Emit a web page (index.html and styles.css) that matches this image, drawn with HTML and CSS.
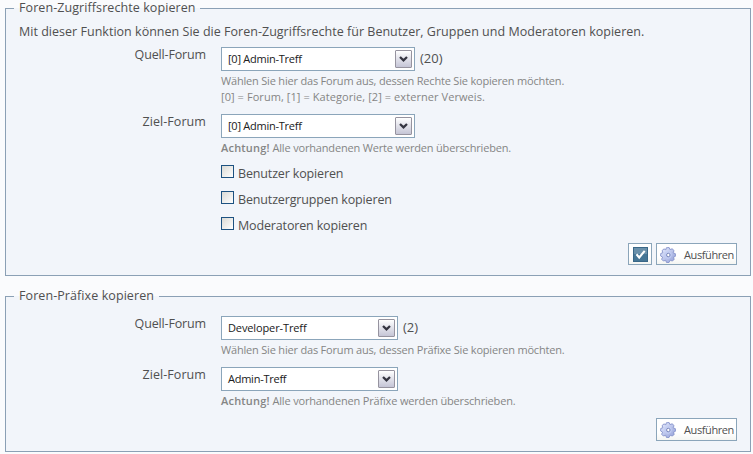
FILE: index.html
```
<!DOCTYPE html>
<html lang="de">
<head>
<meta charset="utf-8">
<title>Foren kopieren</title>
<link rel="stylesheet" href="styles.css">
</head>
<body>
<svg width="0" height="0" class="defs">
  <defs>
    <linearGradient id="gearFill" x1="0" y1="0" x2="1" y2="1"><stop offset="0" stop-color="#e8edff"/><stop offset="1" stop-color="#929fd8"/></linearGradient>
    <symbol id="gear" viewBox="0 0 16 16">
      <path d="M6.3 .8 9.1.5 9.9 2.5 12.4 1.8 14 3.8 13.1 5.8 15.4 6.7 15.4 9.3 13.5 10.2 14.2 12.5 12.1 14 10.3 13.2 9 15.5 6.4 15.4 5.7 13.3 3.4 14 1.6 12.2 2.6 10.2.6 8.9.8 6.4 2.8 5.8 2.1 3.5 4 1.9 5.8 2.8Z" fill="url(#gearFill)" stroke="#8492cb" stroke-width=".9" stroke-linejoin="round"/>
      <circle cx="8" cy="8" r="3.3" fill="none" stroke="#c3cef5"/>
      <circle cx="8.3" cy="8" r="1.7" fill="#fff" stroke="#6675b0" stroke-width=".8"/>
    </symbol>
    <symbol id="arrow" viewBox="0 0 9 6"><path d="M1 1 4.5 4.3 8 1" fill="none" stroke="#343440" stroke-width="2.3"/></symbol>
  </defs>
</svg>
<fieldset class="first">
  <legend class="legend-rights">Foren-Zugriffsrechte kopieren</legend>
  <p class="intro">Mit dieser Funktion können Sie die Foren-Zugriffsrechte für Benutzer, Gruppen und Moderatoren kopieren.</p>
  <div class="row source">
    <label>Quell-Forum</label>
    <div>
      <div class="line"><div class="select"><span>[0] Admin-Treff</span><i><svg><use href="#arrow"/></svg></i></div><span class="count">(20)</span></div>
      <p class="hint">Wählen Sie hier das Forum aus, dessen Rechte Sie kopieren möchten.</p>
      <p class="hint refs">[0] = Forum, [1] = Kategorie, [2] = externer Verweis.</p>
    </div>
  </div>
  <div class="row target">
    <label class="ziel">Ziel-Forum</label>
    <div>
      <div class="select"><span>[0] Admin-Treff</span><i><svg><use href="#arrow"/></svg></i></div>
      <p class="hint warn"><b>Achtung!</b> Alle vorhandenen Werte werden überschrieben.</p>
    </div>
  </div>
  <div class="checks">
    <label><i></i><span>Benutzer kopieren</span></label>
    <label><i></i><span>Benutzergruppen kopieren</span></label>
    <label><i></i><span>Moderatoren kopieren</span></label>
  </div>
  <div class="actions">
    <div class="button toggle"><svg viewBox="0 0 15 15"><path d="M0 0h15v15H0z" fill="#396788"/><path d="M1 1h13v6H1z" fill="#6a90aa"/><path d="M1 7h13v7H1z" fill="#467696"/><path d="m3.5 7.3 2.7 3.2 5.5-6.7" fill="none" stroke="#fff" stroke-width="2.1"/></svg></div>
    <div class="button run"><svg><use href="#gear"/></svg><span>Ausführen</span></div>
  </div>
</fieldset>
<fieldset class="second">
  <legend class="legend-prefix">Foren-Präfixe kopieren</legend>
  <div class="row source">
    <label>Quell-Forum</label>
    <div>
      <div class="line"><div class="select"><span class="dev">Developer-Treff</span><i><svg><use href="#arrow"/></svg></i></div><span class="count">(2)</span></div>
      <p class="hint">Wählen Sie hier das Forum aus, dessen Präfixe Sie kopieren möchten.</p>
    </div>
  </div>
  <div class="row target">
    <label class="ziel">Ziel-Forum</label>
    <div>
      <div class="select"><span>Admin-Treff</span><i><svg><use href="#arrow"/></svg></i></div>
      <p class="hint warn"><b>Achtung!</b> Alle vorhandenen Präfixe werden überschrieben.</p>
    </div>
  </div>
  <div class="actions">
    <div class="button run"><svg><use href="#gear"/></svg><span>Ausführen</span></div>
  </div>
</fieldset>
</body>
</html>
```

FILE: styles.css
```
* { box-sizing: border-box; }
body {
  margin: 0;
  height: 454px;
  overflow: hidden;
  background: #fafbfd;
  color: #505050;
  font: 12.5px/16px "Open Sans", "Noto Sans", sans-serif;
  white-space: nowrap;
}
.defs { position: absolute; }
p { margin: 0; }
i { display: block; }
fieldset {
  margin: 0 2px 0 5px;
  padding: 0 8px;
  border: 1px solid #8ba0b5;
  background: #f2f5fa;
}
.first { height: 276px; }
.second { height: 164px; margin-top: 12px; }
legend { height: 16px; padding: 0 5px; letter-spacing: .08px; }
.legend-rights { width: 186px; }
.legend-prefix { width: 145px; }
.intro { height: 31px; padding: 8px 5px 0; letter-spacing: .02px; }
.row { display: grid; grid-template-columns: 192px 1fr; column-gap: 15px; }
.row > label { text-align: right; letter-spacing: -.15px; }
.row > .ziel { letter-spacing: .07px; }
.first .source { height: 67px; }
.first .target { height: 51px; }
.second .source { height: 51px; margin-top: 12px; }
.second .target { height: 51px; }
.line { display: flex; }
.select {
  display: flex;
  justify-content: space-between;
  width: 194px;
  height: 24px;
  padding: 2px 2px 2px 6px;
  border: 1px solid #8ba5ba;
  background: #fff;
  color: #202020;
  font-size: 11px;
  line-height: 18px;
  letter-spacing: -.25px;
}
.select .dev { letter-spacing: -.12px; }
.second .select { width: 177px; }
.select i {
  display: flex;
  align-items: center;
  justify-content: center;
  width: 17px;
  height: 18px;
  border: 1px solid #96939f;
  border-radius: 1px;
  background: linear-gradient(#fff, #e4e4ec 45%, #c5c5d6);
}
.select svg { width: 9px; height: 6px; }
.count { margin-left: 5px; font-size: 13px; line-height: 22px; }
.hint { height: 16px; margin-top: 2px; color: #858585; font-size: 11px; letter-spacing: -.19px; }
.hint.refs { margin-top: 0; letter-spacing: .07px; }
.hint.warn { letter-spacing: -.17px; }
.hint b { font-weight: 600; letter-spacing: .2px; }
.checks { margin-left: 207px; height: 78px; letter-spacing: -.15px; }
.checks label { display: flex; height: 26px; line-height: 17px; }
.checks i {
  width: 13px;
  height: 13px;
  margin-right: 4px;
  border: 1px solid #1d5281;
  background: linear-gradient(135deg, #dadad5, #fff);
}
.actions { display: flex; justify-content: flex-end; gap: 4px; padding-right: 5px; }
.button {
  display: flex;
  align-items: center;
  height: 22px;
  border: 1px solid #8ba5ba;
  background: linear-gradient(#fff 65%, #f4f5f2);
  font-size: 11px;
  letter-spacing: -.4px;
}
.first .run { padding-top: 2px; }
.second .button { height: 23px; }
.toggle { width: 24px; padding-left: 4px; }
.toggle svg { width: 15px; height: 15px; }
.run { width: 81px; padding-left: 3px; }
.run svg { width: 16px; height: 16px; margin-right: 8px; }
```
